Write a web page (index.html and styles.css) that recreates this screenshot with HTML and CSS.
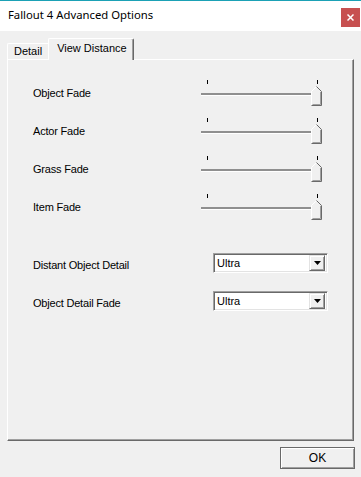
FILE: index.html
```html
<!DOCTYPE html>
<html lang="en">
<head>
    <meta charset="UTF-8">
    <title>Fallout 4 Advanced Options</title>
    <link rel="stylesheet" href="styles.css">
</head>
<body>
    <div class="titlebar">
        <span class="title">Fallout 4 Advanced Options</span>
        <button class="close">
            <svg width="7" height="7" viewBox="0 0 7 7"><path d="M0.5 0.5 L6.5 6.5 M6.5 0.5 L0.5 6.5" stroke="#fff" stroke-width="1.5"/></svg>
        </button>
    </div>

    <div class="dialog">
        <div class="tabs">
            <div class="tab">Detail</div>
            <div class="tab active">View Distance</div>
        </div>

        <div class="panel">
            <div class="row">
                <label>Object Fade</label>
                <div class="slider">
                    <div class="ticks"><i></i><i></i></div>
                    <div class="track"></div>
                    <svg class="thumb" width="12" height="20" viewBox="0 0 12 20">
                        <polygon points="0.5,19.5 0.5,5.5 5.5,0.5 10.5,5.5 10.5,19.5" fill="#f0f0f0"/>
                        <path d="M0.5 19 V5.5 L5.5 0.5" fill="none" stroke="#fff"/>
                        <path d="M5.5 0.5 L10.5 5.5 V19.5 H0.5" fill="none" stroke="#696969"/>
                        <path d="M9.5 6 V18.5 H1.5" fill="none" stroke="#a0a0a0"/>
                    </svg>
                </div>
            </div>
            <div class="row">
                <label>Actor Fade</label>
                <div class="slider">
                    <div class="ticks"><i></i><i></i></div>
                    <div class="track"></div>
                    <svg class="thumb" width="12" height="20" viewBox="0 0 12 20">
                        <polygon points="0.5,19.5 0.5,5.5 5.5,0.5 10.5,5.5 10.5,19.5" fill="#f0f0f0"/>
                        <path d="M0.5 19 V5.5 L5.5 0.5" fill="none" stroke="#fff"/>
                        <path d="M5.5 0.5 L10.5 5.5 V19.5 H0.5" fill="none" stroke="#696969"/>
                        <path d="M9.5 6 V18.5 H1.5" fill="none" stroke="#a0a0a0"/>
                    </svg>
                </div>
            </div>
            <div class="row">
                <label>Grass Fade</label>
                <div class="slider">
                    <div class="ticks"><i></i><i></i></div>
                    <div class="track"></div>
                    <svg class="thumb" width="12" height="20" viewBox="0 0 12 20">
                        <polygon points="0.5,19.5 0.5,5.5 5.5,0.5 10.5,5.5 10.5,19.5" fill="#f0f0f0"/>
                        <path d="M0.5 19 V5.5 L5.5 0.5" fill="none" stroke="#fff"/>
                        <path d="M5.5 0.5 L10.5 5.5 V19.5 H0.5" fill="none" stroke="#696969"/>
                        <path d="M9.5 6 V18.5 H1.5" fill="none" stroke="#a0a0a0"/>
                    </svg>
                </div>
            </div>
            <div class="row">
                <label>Item Fade</label>
                <div class="slider">
                    <div class="ticks"><i></i><i></i></div>
                    <div class="track"></div>
                    <svg class="thumb" width="12" height="20" viewBox="0 0 12 20">
                        <polygon points="0.5,19.5 0.5,5.5 5.5,0.5 10.5,5.5 10.5,19.5" fill="#f0f0f0"/>
                        <path d="M0.5 19 V5.5 L5.5 0.5" fill="none" stroke="#fff"/>
                        <path d="M5.5 0.5 L10.5 5.5 V19.5 H0.5" fill="none" stroke="#696969"/>
                        <path d="M9.5 6 V18.5 H1.5" fill="none" stroke="#a0a0a0"/>
                    </svg>
                </div>
            </div>

            <div class="row combo-row first">
                <label>Distant Object Detail</label>
                <div class="combo">
                    <span class="value">Ultra</span>
                    <span class="drop"><svg width="7" height="4" viewBox="0 0 7 4"><polygon points="0,0 7,0 3.5,4" fill="#000"/></svg></span>
                </div>
            </div>
            <div class="row combo-row">
                <label>Object Detail Fade</label>
                <div class="combo">
                    <span class="value">Ultra</span>
                    <span class="drop"><svg width="7" height="4" viewBox="0 0 7 4"><polygon points="0,0 7,0 3.5,4" fill="#000"/></svg></span>
                </div>
            </div>
        </div>

        <div class="buttons">
            <button class="ok">OK</button>
        </div>
    </div>
</body>
</html>
```

FILE: styles.css
```css
body {
    margin: 0;
    width: 361px;
    height: 477px;
    box-sizing: border-box;
    overflow: hidden;
    background-color: #f0f0f0;
    border-top: 1px solid #1ba1b5;
    font-family: 'Liberation Sans', Arial, sans-serif;
    font-size: 11px;
    color: #000;
}
.titlebar {
    height: 30px;
    background-color: #fff;
    display: flex;
    justify-content: space-between;
    align-items: flex-start;
}
.title {
    font-family: 'Noto Sans', sans-serif;
    font-size: 11.3px;
    line-height: 16px;
    padding: 6px 0 0 8px;
}
.close {
    margin-top: 7px;
    margin-right: 1px;
    width: 19px;
    height: 19px;
    padding: 0;
    border: none;
    background-color: #c75050;
    display: flex;
    align-items: center;
    justify-content: center;
}
.dialog {
    padding: 7px 6px 0 7px;
}
.tabs {
    display: flex;
    align-items: flex-end;
    height: 21px;
}
.tab {
    position: relative;
    height: 16px;
    box-sizing: border-box;
    padding: 0 6px;
    line-height: 14px;
    border-top: 1px solid #fff;
    border-left: 1px solid #fff;
    border-top-left-radius: 2px;
}
.tab.active {
    z-index: 1;
    height: 22px;
    margin-bottom: -1px;
    padding: 2px 6px 0 8px;
    background-color: #f0f0f0;
    border-right: 1px solid #696969;
    border-top-right-radius: 2px;
    box-shadow: inset -1px 0 #a0a0a0;
}
.panel {
    height: 382px;
    box-sizing: border-box;
    margin-right: 1px;
    padding: 14px 0 0 25px;
    border-top: 1px solid #fff;
    border-left: 1px solid #fff;
    border-right: 1px solid #696969;
    border-bottom: 1px solid #696969;
    box-shadow: inset -1px -1px #a0a0a0;
}
.row {
    display: flex;
    align-items: center;
    height: 38px;
}
.row label {
    width: 168px;
    letter-spacing: -0.2px;
}
.combo-row label {
    width: 180px;
    padding-top: 3px;
}
.combo-row.first {
    margin-top: 18px;
}
.slider {
    position: relative;
    width: 121px;
    height: 28px;
}
.ticks {
    display: flex;
    justify-content: space-between;
    padding: 1px 4px 0 6px;
}
.ticks i {
    width: 1px;
    height: 4px;
    background-color: #000;
}
.track {
    width: 111px;
    height: 2px;
    margin-top: 9px;
    background-color: #8f8f8f;
    border-bottom: 1px solid #fff;
}
.thumb {
    position: absolute;
    left: 110px;
    top: 7px;
}
.combo {
    width: 115px;
    height: 20px;
    box-sizing: border-box;
    display: flex;
    align-items: center;
    justify-content: space-between;
    background-color: #fff;
    border: 1px solid;
    border-color: #a0a0a0 #fff #fff #a0a0a0;
    box-shadow: inset 1px 1px #696969, inset -1px -1px #e3e3e3;
    padding: 2px 2px 2px 3px;
}
.value {
    line-height: 14px;
}
.drop {
    width: 16px;
    height: 16px;
    box-sizing: border-box;
    display: flex;
    align-items: center;
    justify-content: center;
    background-color: #f0f0f0;
    border: 1px solid;
    border-color: #e3e3e3 #696969 #696969 #e3e3e3;
    box-shadow: inset 1px 1px #fff, inset -1px -1px #a0a0a0;
}
.buttons {
    display: flex;
    justify-content: flex-end;
    margin-top: 6px;
}
.ok {
    width: 75px;
    height: 22px;
    padding: 0;
    font-family: 'Liberation Sans', Arial, sans-serif;
    font-size: 12px;
    color: #000;
    background-color: #f0f0f0;
    border: 1px solid #696969;
    box-shadow: inset 1px 1px #fff, inset -1px -1px #a0a0a0;
}
```
